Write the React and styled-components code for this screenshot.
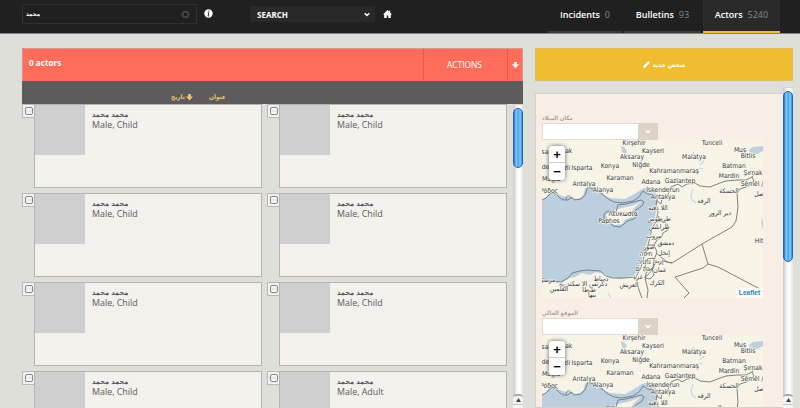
import React from 'react';
import styled, { createGlobalStyle, css } from 'styled-components';

const Global = createGlobalStyle`
  * { box-sizing: border-box; }
  body {
    margin: 0;
    overflow: hidden;
    background: #dfdfd9;
    font-family: "Open Sans", "DejaVu Sans", sans-serif;
    color: #5c5a5a;
  }
`;

const arabicText = css`
  font-family: "DejaVu Sans Condensed", "DejaVu Sans", sans-serif;
  font-stretch: condensed;
  font-weight: 700;
  line-height: 10px;
`;

const Page = styled.div`
  height: 408px;
  overflow: hidden;
  display: flex;
  flex-direction: column;
`;

const TopBar = styled.header`
  height: 34px;
  flex: none;
  display: flex;
  align-items: flex-start;
  padding-left: 22px;
  background: #202020;
  border-bottom: 1px solid #85827f;
  color: #fff;
`;

const SearchField = styled.div`
  width: 175px;
  height: 20px;
  margin-top: 4px;
  padding: 0 6px 0 3px;
  display: flex;
  align-items: center;
  justify-content: space-between;
  border: 1px solid #313131;
  ${arabicText}
  font-size: 6px;
`;

const TopIcon = styled.svg`
  width: 9px;
  height: 9px;
  flex: none;
  display: block;
  margin: ${(p) => p.$margin || 0};
`;

const ModeSelect = styled.div`
  width: 125px;
  height: 16px;
  margin: 6px 0 0 37px;
  padding: 0 5px 0 7px;
  display: flex;
  align-items: center;
  justify-content: space-between;
  background: #292929;
  font-size: 8px;
  font-weight: 700;
`;

const Tabs = styled.nav`
  display: flex;
  gap: 2px;
  margin-left: auto;
  margin-right: 20px;
`;

const Tab = styled.a`
  width: ${(p) => p.$width}px;
  height: 33px;
  padding-top: 9px;
  display: flex;
  justify-content: center;
  gap: 5px;
  font-size: 9.1px;
  line-height: 12px;
  font-weight: 600;
  letter-spacing: -0.05px;
  background: ${(p) => (p.$active ? '#2a2a2a' : 'transparent')};
  border-bottom: 2px solid ${(p) => (p.$active ? '#f0bd30' : '#3a3a3a')};
`;

const Count = styled.span`
  color: #858585;
  font-weight: 400;
`;

const Columns = styled.main`
  flex: 1;
  min-height: 0;
  display: flex;
  gap: 12px;
  padding: 14px 7px 0 22px;
`;

const ListColumn = styled.section`
  width: 501px;
  display: flex;
  flex-direction: column;
`;

const ListHeader = styled.div`
  height: 33px;
  flex: none;
  display: flex;
  align-items: stretch;
  background: #ff6d5a;
  border: 1px solid #d59a8e;
  border-bottom: 0;
  color: #fff;
`;

const ListTitle = styled.div`
  flex: 1;
  padding: 8px 0 0 6px;
  font-size: 8.2px;
  line-height: 12px;
  font-weight: 700;
`;

const ActionsButton = styled.div`
  width: 84px;
  padding: 0 2px 1px 0;
  display: flex;
  align-items: center;
  justify-content: center;
  border-left: 1px solid #d96052;
  font-size: 8.4px;
`;

const ActionsToggle = styled.div`
  width: 15px;
  display: flex;
  align-items: center;
  justify-content: center;
  border-left: 1px solid #d96052;
`;

const SortBar = styled.div`
  height: 23px;
  flex: none;
  display: flex;
  align-items: flex-start;
  padding: 11px 0 0 149px;
  background: #5d5b5b;
  color: #ecc672;
  ${arabicText}
  font-size: 6.4px;
`;

const SortItem = styled.span`
  width: ${(p) => p.$width}px;
  margin-right: 16px;
  display: flex;
  align-items: center;
  gap: 1px;
`;

const ListBody = styled.div`
  flex: 1;
  min-height: 0;
  display: flex;
  justify-content: space-between;
`;

const CardGrid = styled.div`
  width: 486px;
  display: grid;
  grid-template-columns: 240px 240px;
  grid-auto-rows: 84px;
  gap: 5px;
  align-content: start;
  overflow: hidden;
`;

const CardRow = styled.article`
  display: flex;
  align-items: flex-start;
`;

const CheckCell = styled.div`
  width: 12px;
  height: 14px;
  padding-left: 1px;
  display: flex;
  align-items: center;
  justify-content: center;
  background: #f4f0ec;
  border: 1px solid #bbb9b5;
  border-right: 0;
`;

const CheckBox = styled.span`
  width: 8px;
  height: 8px;
  border: 1px solid #858585;
  border-radius: 2px;
  background: linear-gradient(#fff, #e6e6e6 50%, #fff);
`;

const CardBox = styled.div`
  width: 228px;
  height: 84px;
  display: flex;
  background: #f4f0ec;
  border: 1px solid #b5b4b0;
`;

const Photo = styled.div`
  width: 50px;
  height: 50px;
  background: #cfcfcf;
`;

const CardText = styled.div`
  padding: 5px 0 0 7px;
  font-size: 8.9px;
  line-height: 10px;
`;

const ArabicName = styled.div`
  ${arabicText}
  font-size: 7.3px;
`;

const ScrollTrack = styled.div`
  width: ${(p) => p.$width}px;
  flex: none;
  background: linear-gradient(90deg, #c9c9c9, #f1f1f1 35%, #fff 65%, #e4e4e4);
  border-top: 1px solid #d4d4d2;
  padding-top: ${(p) => p.$inset}px;
  display: flex;
  flex-direction: column;
  justify-content: space-between;
`;

const ScrollThumb = styled.div`
  height: ${(p) => p.$height}px;
  border-radius: 5px;
  border: 1px solid #2c62b5;
  background: linear-gradient(90deg, #276fd0, #8dcbf8 28%, #49a4f2 50%, #6fd0ff 80%, #2e83d4);
`;

const ScrollEnd = styled.div`
  height: ${(p) => p.$height}px;
  background: #f4f4f4;
  border-top: 2px solid #aaa;
  border-radius: 4px 4px 0 0;
  display: flex;
  flex-direction: column;
  align-items: center;
`;

const ScrollDivider = styled.span`
  width: 100%;
  height: 1px;
  background: #c4c4c4;
`;

const SideColumn = styled.aside`
  width: 258px;
  display: flex;
  flex-direction: column;
`;

const NewButton = styled.div`
  height: 33px;
  flex: none;
  display: flex;
  align-items: center;
  justify-content: center;
  gap: 3px;
  background: #f0bd30;
  border: 1px solid #dfbd67;
  color: #fff;
  ${arabicText}
  font-size: 6.4px;
`;

const SideBody = styled.div`
  flex: 1;
  min-height: 0;
  margin-top: 6px;
  display: flex;
`;

const FilterPanel = styled.div`
  width: 248px;
  margin-top: 6px;
  padding: 19px 0 0 6px;
  background: #f8eee5;
  border: 1px solid #d3d0c9;
  border-right: 0;
  overflow: hidden;
`;

const MapField = styled.div`
  height: 195px;
`;

const FieldLabel = styled.div`
  height: 10px;
  ${arabicText}
  font-size: 5.8px;
  letter-spacing: -0.2px;
  color: #aca39b;
`;

const Combo = styled.div`
  display: flex;
  width: 116px;
  height: 17px;
  border: 1px solid #e6dbd1;
  background: #fff;
`;

const ComboArrow = styled.span`
  width: 20px;
  margin: -1px -1px -1px auto;
  display: flex;
  align-items: center;
  justify-content: center;
  background: #dcd2c7;
`;

const MapFrame = styled.div`
  position: relative;
  width: 221px;
  height: 158px;
  overflow: hidden;
`;

const MapDrawing = styled.svg`
  display: block;
  font-family: "DejaVu Sans Condensed", "DejaVu Sans", sans-serif;
  font-stretch: condensed;
  font-size: 6.7px;
`;

const ZoomControl = styled.div`
  position: absolute;
  left: 7px;
  top: 6px;
  width: 16px;
  height: 34px;
  border-radius: 3px;
  background: #fff;
  box-shadow: 0 0 4px rgba(0, 0, 0, 0.6);
`;

const ZoomButton = styled.div`
  height: 17px;
  font: bold 13px/17px "Liberation Sans", sans-serif;
  text-align: center;
  color: #000;
  ${(p) => p.$divided && css`border-bottom: 1px solid #ccc;`}
`;

const Attribution = styled.div`
  position: absolute;
  right: 0;
  bottom: 0;
  width: 27px;
  height: 10px;
  background: rgba(255, 255, 255, 0.75);
  color: #2a86b5;
  font: bold 6.6px/10px "Liberation Sans", sans-serif;
  text-align: center;
`;

const Chevron = () => (
  <svg width="6" height="5" viewBox="0 0 6 5" fill="none" stroke="#fff" strokeWidth="1.5">
    <path d="M.7 1.2 3 3.5 5.3 1.2" />
  </svg>
);

const ArrowIcon = styled.svg`
  width: 7px;
  height: 7px;
  flex: none;
`;

const DownArrow = ({ color }) => (
  <ArrowIcon viewBox="0 0 7 7" fill={color}>
    <path d="M2.2 0h2.6v2.6H7L3.5 6.6 0 2.6h2.2z" />
  </ArrowIcon>
);

const LABELS = [
  ['Kırşehir', 92, 2.5], ['Kayseri', 111, 10.5], ['Aksaray', 90, 17], ['Niğde', 99, 25],
  ['Konya', 68, 26], ['Isparta', 40, 28], ['Karaman', 78, 38], ['Antalya', 42, 44],
  ['Alanya', 61, 50], ['Adana', 109, 42], ['Kahramanmaraş', 132, 31], ['Gaziantep', 138, 41],
  ['İskenderun', 121, 50], ['Antakya', 121, 56.5], ['Malatya', 152, 17], ['Tunceli', 170, 2.5],
  ['Muş', 198, 9.5], ['Bitlis', 206, 16], ['Batman', 192, 26], ['Mardin', 187, 36],
  ['Şırnak', 211, 33], ['Sêmêl /', 210, 44], ['الحسكة', 187, 51], ['صل', 217, 54],
  ['الرقه', 162, 61], ['دير الزور', 178, 72.5], ['Hit', 217, 101], ['Uşak', 23, 11],
  ['sa', 3, 12], ['Denizli', 18, 28], ['de', 3.5, 27], ['Muğla', 9, 38.5], ['Ρόδος', 7, 51],
  ['Λευκωσία', 81, 74], ['Paphos', 67, 81], ['اللا ذقية', 116, 68], ['طرطوس', 117, 79],
  ['طرابلس', 117, 87], ['بيروت', 112, 96], ['دمشق', 124, 103], ['صور', 107, 107],
  ['إنخل', 122, 113], ['חיפה', 104, 114], ['إربد', 117, 121], ['נתניה', 102, 122],
  ['בת ים', 101, 129], ['عمان', 118, 130], ['غزة', 96, 137], ['الكرك', 115, 143],
  ['العريش', 87, 145], ['دمياط', 59, 138.5], ['دكرنس', 56, 144], ['الإ سكندرية', 31, 143.5],
  ['طنطا', 47, 149.5], ['بنها', 50, 155], ['العلمين', 17, 149], ['مرسى', 5, 140],
];

const TURKEY_COAST =
  'M0 60 4 58 9 53 14 54 18 58 22 60 26 60 29 57 33 60 39 59 43 55 46 47 51 49 55 50 60 54 66 59 72 62 80 63 91 61 97 57 101 51 106 54 111 55 115 59';

function RegionMap() {
  return (
    <MapDrawing width="221" height="158" viewBox="0 0 221 158">
      <rect width="221" height="158" fill="#f7f3e7" />
      <path
        fill="#bccfdf"
        d="M0 60 3 58 9 51 16 54 20 56 26 57 33 59 38 58 42 54 43 48 51 47 59 50 62 55 68 58 83 59 94 53 100 49 106 47 113 50 116 60 114 70 113 80 109 88 107 97 103 108 100 119 96 131 91 136 78 139 68 137 62 134 54 132 48 135 40 133 33 137 27 138 20 143 9 142 0 137Z"
      />
      <path fill="#f7f3e7" d="M64 74 70 73 73 70 80 68 89 66 99 62 92 68 89 72 92 76 84 79 80 84 73 85 67 83Z" />
      <path fill="#bccfdf" d="M79 6l3 1 3 4-2 3-3-2zM207 10l4-3 10-1v5l-6 3-7-1zM219.500 78l1.500 3v8l-1.500-3z" />
      <g fill="none" stroke="#c6d6e2" strokeWidth="1.2">
        <path d="M151 12l2 4M158 25l4-4M157 28l4 1M151 49l-2 6 1 5 4 3M66 153l3 5" />
      </g>
      <g fill="none" stroke="#6e7a82" strokeWidth=".9">
        <path d={TURKEY_COAST} />
        <path d="M24 60c0-6 5-5 5-1" />
        <path d="M62 74 66 71 74 72 76 65 84 64 99 60 102 62 100 66 91 72 95 76 92 79 85 81 82 84 78 87 71 86 68 82 62 79Z" />
        <path d="M115 59 114 66 116 72 114 82 110 88 108 98 105 108 102 117 99 127 94 137M0 138 7 141 19 142 26 138 30 133 38 131 46 130 58 131 64 136 70 138 82 138 94 137" />
      </g>
      <g fill="none" stroke="#77736a" strokeWidth=".9">
        <path d="M115 61 119 64 120 58 126 55 129 47 136 44 140 47 145 44 153 43 158 46 168 47 178 43 184 41 195 40 204 40 210 37 213 33M210 37l2 4-5 5-9 3-3 4 1 14-2 14-4 6-30 17-22 14-8 5-9-2-5 1M160 104l6 20-5 4-28 9 14 16-5 5M166 124l10 3 42 22 3 3" />
        <path d="M106 105h6l3-5 4-2 2-5 5-3-1-6-4-3-6 1M112 105l3 7-3 8-1 9-8 9 3 12-1 8M94 138l3 12 3 8M105 119l6-1 3 4-4 7-8 2zM114 113l11 9 5 1M105 130l5-1 2 6-4 4-5-1z" />
      </g>
      <g fill="#34373d" stroke="#fbf8ef" strokeWidth="1.2" paintOrder="stroke" textAnchor="middle">
        {LABELS.map(([name, x, y]) => (
          <text key={name} x={x} y={y + 2.2}>{name}</text>
        ))}
      </g>
    </MapDrawing>
  );
}

function LocationField({ label }) {
  return (
    <MapField>
      <FieldLabel>{label}</FieldLabel>
      <Combo><ComboArrow><Chevron /></ComboArrow></Combo>
      <MapFrame>
        <RegionMap />
        <ZoomControl>
          <ZoomButton $divided>+</ZoomButton>
          <ZoomButton>−</ZoomButton>
        </ZoomControl>
        <Attribution>Leaflet</Attribution>
      </MapFrame>
    </MapField>
  );
}

function ActorCard({ detail }) {
  return (
    <CardRow>
      <CheckCell><CheckBox /></CheckCell>
      <CardBox>
        <Photo />
        <CardText>
          <ArabicName>محمد محمد</ArabicName>
          {detail}
        </CardText>
      </CardBox>
    </CardRow>
  );
}

function Scrollbar({ width, inset, thumb, end }) {
  return (
    <ScrollTrack $width={width} $inset={inset}>
      <ScrollThumb $height={thumb} />
      <ScrollEnd $height={end}>
        <svg width="5" height="8" viewBox="0 0 5 8"><path d="M0 6 2.5 2 5 6z" fill="#444" /></svg>
        <ScrollDivider />
      </ScrollEnd>
    </ScrollTrack>
  );
}

const ACTORS = ['Male, Child', 'Male, Child', 'Male, Child', 'Male, Child', 'Male, Child', 'Male, Child', 'Male, Child', 'Male, Adult'];

export default function App() {
  return (
    <Page>
      <Global />
      <TopBar>
        <SearchField>
          <span>محمد</span>
          <TopIcon viewBox="0 0 9 9">
            <circle cx="4.5" cy="4.5" r="3.8" fill="#464646" />
            <path d="M3 3l3 3M6 3 3 6" stroke="#151515" strokeWidth="1.5" />
          </TopIcon>
        </SearchField>
        <TopIcon viewBox="0 0 9 9" $margin="9px 0 0 7px">
          <circle cx="4.5" cy="4.5" r="4.2" fill="#fff" />
          <path d="M4.9 1.6v1.2M3.8 3.9h.9L4.1 7h1" stroke="#222" strokeWidth="1" fill="none" />
        </TopIcon>
        <ModeSelect>SEARCH<Chevron /></ModeSelect>
        <TopIcon viewBox="0 0 9 9" $margin="10px 0 0 8px">
          <path d="M4.500 0 6 1.400V.7h1.200v1.800L9 4.400H7.800V8H5.300V5.500H3.700V8H1.200V4.400H0z" fill="#fff" />
        </TopIcon>
        <Tabs>
          <Tab $width={74}>Incidents <Count>0</Count></Tab>
          <Tab $width={77}>Bulletins <Count>93</Count></Tab>
          <Tab $width={77} $active>Actors <Count>5240</Count></Tab>
        </Tabs>
      </TopBar>
      <Columns>
        <ListColumn>
          <ListHeader>
            <ListTitle>0 actors</ListTitle>
            <ActionsButton>ACTIONS</ActionsButton>
            <ActionsToggle><DownArrow color="#fff" /></ActionsToggle>
          </ListHeader>
          <SortBar>
            <SortItem $width={22}>تاريخ <DownArrow color="#ecc672" /></SortItem>
            <SortItem $width={20}>عنوان</SortItem>
          </SortBar>
          <ListBody>
            <CardGrid>
              {ACTORS.map((detail, i) => <ActorCard key={i} detail={detail} />)}
            </CardGrid>
            <Scrollbar width={10} inset={3} thumb={60} end={14} />
          </ListBody>
        </ListColumn>
        <SideColumn>
          <NewButton>
            <svg width="7" height="7" viewBox="0 0 7 7" fill="#fff">
              <path d="M0 7 .5 4.8 4.800.5Q5.500 0 6.400.8 7 1.500 6.500 2.200L2.200 6.500z" />
            </svg>
            <span>شخص جديد</span>
          </NewButton>
          <SideBody>
            <FilterPanel>
              <LocationField label="مكان الميلاد" />
              <LocationField label="الموقع الحالي" />
            </FilterPanel>
            <Scrollbar width={10} inset={3} thumb={171} end={14} />
          </SideBody>
        </SideColumn>
      </Columns>
    </Page>
  );
}
